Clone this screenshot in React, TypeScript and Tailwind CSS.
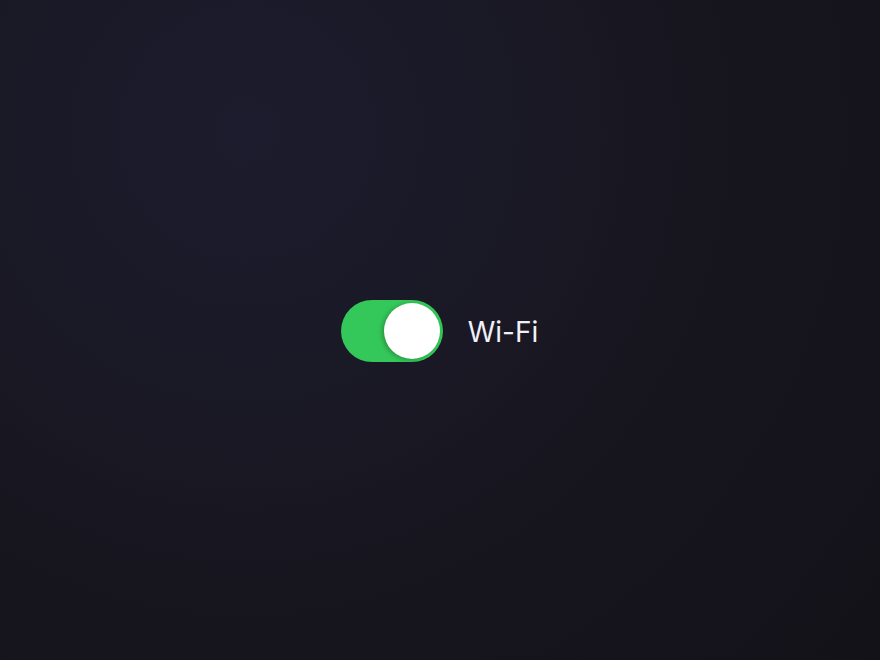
export default function App() {
  return (
    <div className="flex h-[660px] w-full items-center justify-center bg-[radial-gradient(circle_at_28%_20%,#1d1c2e_0%,#17161f_55%,#131219_100%)] pt-[2px] pr-[1px]">
      <label className="flex items-center gap-[25px]">
        <button
          type="button"
          role="switch"
          aria-checked="true"
          className="flex h-[62px] w-[102px] items-center justify-end rounded-full bg-[#34c759] p-[3px]"
        >
          <span className="block h-[56px] w-[56px] rounded-full bg-white shadow-[-2px_1px_4px_rgba(0,0,0,0.25)]" />
        </button>
        <span className="mt-[2px] font-['Inter',sans-serif] text-[28px] text-[#f1eff8]">Wi-Fi</span>
      </label>
    </div>
  );
}
